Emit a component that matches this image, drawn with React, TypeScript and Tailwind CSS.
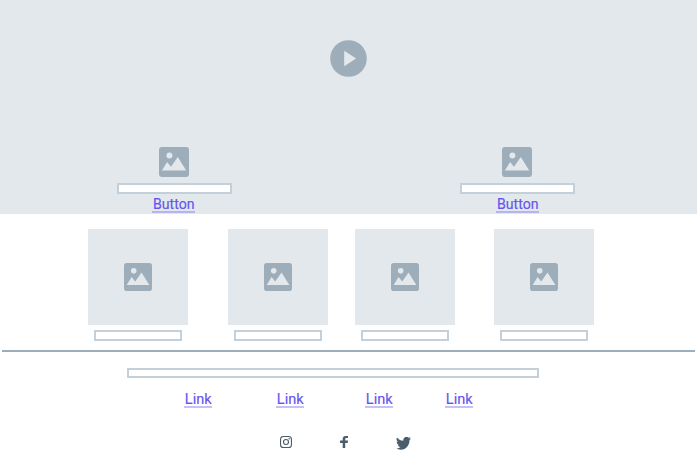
import React from "react";

function Picture({ className }: { className: string }) {
  return (
    <svg viewBox="0 0 30 30" className={`block shrink-0 ${className}`}>
      <rect width="30" height="30" rx="3" fill="#9eadba" />
      <circle cx="10.4" cy="8.4" r="3" fill="#e2e8ec" />
      <path d="M2.9 23.5 8.1 15l3.9 4.8 6.8-9.7 8.4 13.4Z" fill="#e2e8ec" />
    </svg>
  );
}

function TextLink({ label, className, scale }: { label: string; className: string; scale: string }) {
  return (
    <a className={`flex h-[18px] shrink-0 justify-center border-b-2 text-[15.5px] leading-[18px] text-[#6554f0] ${className}`}>
      <span className={`block whitespace-nowrap [-webkit-text-stroke:0.15px_#6554f0] ${scale}`}>{label}</span>
    </a>
  );
}

function HeroItem({ linkClass }: { linkClass: string }) {
  return (
    <div className="flex w-[115px] flex-col items-center">
      <Picture className="mr-px size-[30px]" />
      <div className="mt-1.5 h-[11px] w-full border-2 border-[#c3cfd9] bg-white" />
      <TextLink label="Button" className={`mt-px w-[43px] border-[#b6b4ee] ${linkClass}`} scale="scale-x-[0.91]" />
    </div>
  );
}

function Card() {
  return (
    <div className="flex w-[100px] flex-col items-center">
      <div className="flex h-24 w-full items-center justify-center bg-[#e2e8ec]">
        <Picture className="size-7" />
      </div>
      <div className="mt-[5px] h-[11px] w-[88px] border-2 border-[#c3cfd9]" />
    </div>
  );
}

function FooterLink() {
  return <TextLink label="Link" className="w-7 border-[#c5bffb]" scale="scale-x-[0.94]" />;
}

export default function App() {
  return (
    <main className="h-[455px] w-[697px] overflow-hidden bg-white font-['Roboto',sans-serif]">
      <section className="flex h-[214px] flex-col bg-[#e2e8ec] pt-10">
        <svg viewBox="0 0 37 37" className="mx-auto block size-[37px] shrink-0">
          <circle cx="18.5" cy="18.5" r="18.3" fill="#9eadba" />
          <path d="M14.2 10.7v15.6l11.9-7.8Z" fill="#e2e8ec" />
        </svg>
        <div className="mt-[70px] flex gap-[228px] pl-[117px]">
          <HeroItem linkClass="mr-[2px]" />
          <HeroItem linkClass="" />
        </div>
      </section>
      <section className="grid grid-cols-[140px_127px_139px_100px] pt-[15px] pl-[88px]">
        <Card />
        <Card />
        <Card />
        <Card />
      </section>
      <hr className="mx-0.5 mt-[9px] h-0.5 border-0 bg-[#9eadba]" />
      <footer>
        <div className="mt-4 ml-[127px] h-2.5 w-[412px] border-2 border-[#c3cfd9]" />
        <nav className="mt-3 grid grid-cols-[92px_89px_80px_28px] pl-[184px]">
          <FooterLink />
          <FooterLink />
          <FooterLink />
          <FooterLink />
        </nav>
        <div className="mt-7 flex pl-[280px]">
          <svg viewBox="0 0 12 12" className="block size-3" fill="none" stroke="#4b5c6b">
            <rect x=".55" y=".55" width="10.9" height="10.9" rx="2.8" strokeWidth="1.1" />
            <circle cx="6" cy="6" r="2.5" strokeWidth="1.1" />
            <circle cx="9.2" cy="2.8" r=".75" fill="#4b5c6b" stroke="none" />
          </svg>
          <svg viewBox="0 0 8 12" className="ml-12 block h-3 w-2" fill="#4b5c6b">
            <path d="M2.7 12V7H0V4.6h2.7V3.1C2.7 1 3.8 0 5.5 0H8v2H6.4C5.5 2 5.2 2.4 5.2 3.2v1.4H8L7.7 7H5.2v5Z" />
          </svg>
          <svg viewBox="0 2.5 24 19.5" className="mt-px ml-12 block h-[13px] w-[15px]" fill="#4b5c6b" preserveAspectRatio="none">
            <path d="M23.95 4.57a10 10 0 0 1-2.82.77 4.96 4.96 0 0 0 2.16-2.72c-.95.55-2 .95-3.13 1.18a4.92 4.92 0 0 0-8.38 4.48C7.69 8.1 4.07 6.13 1.64 3.16a4.93 4.93 0 0 0 1.52 6.57 4.9 4.9 0 0 1-2.23-.61v.06a4.92 4.92 0 0 0 3.95 4.83 5 5 0 0 1-2.21.08 4.94 4.94 0 0 0 4.6 3.42A9.87 9.87 0 0 1 0 19.54a14 14 0 0 0 7.55 2.21c9.05 0 14-7.5 14-13.98 0-.21 0-.42-.02-.63a9.94 9.94 0 0 0 2.42-2.57Z" />
          </svg>
        </div>
      </footer>
    </main>
  );
}
